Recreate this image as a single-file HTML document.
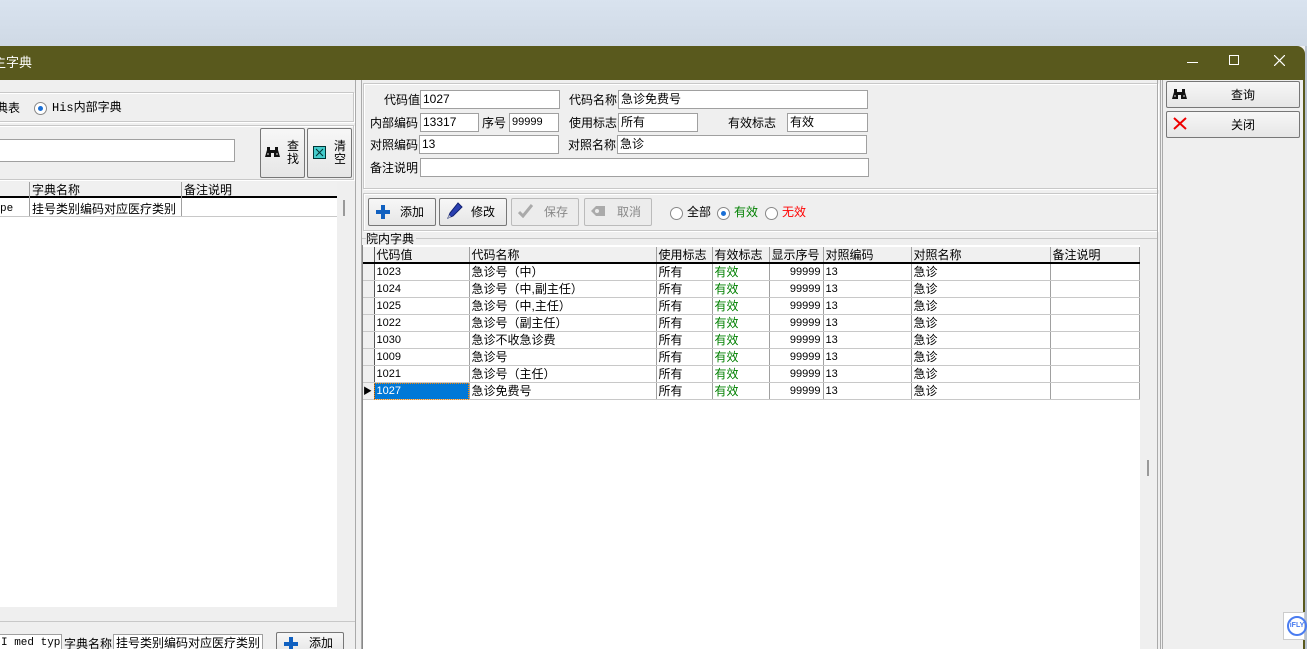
<!DOCTYPE html>
<html style="width:1307px;height:649px;overflow:hidden"><head><meta charset="utf-8">
<style>
*{box-sizing:border-box;margin:0;padding:0}
body{width:1307px;height:649px;overflow:hidden;background:#efefef;font-family:"Liberation Sans","Noto Sans CJK SC",sans-serif;font-size:12px;color:#000;position:relative}
.a{position:absolute}
.inp{position:absolute;background:#fff;border:1px solid #a0a0a0;height:19px;padding:1px 2px;font-size:12px;line-height:15px;white-space:nowrap;overflow:hidden}
.lbl{position:absolute;font-size:12px;line-height:14px;white-space:nowrap}
.btn{position:absolute;background:linear-gradient(#f7f7f7,#e6e6e6);border:1px solid #777;border-radius:2px;font-size:12px}
.grp{position:absolute;border:1px solid #c8c8c8;box-shadow:inset 1px 1px 0 #fff,1px 1px 0 #fff}
table{border-collapse:collapse;table-layout:fixed}
td{border-right:1px solid #a0a0a0;border-bottom:1px solid #c8c8c8;height:17px;padding:0 2px;font-size:11px;line-height:16px;white-space:nowrap;overflow:hidden}
td.c{font-size:12px}
.g{color:#008000;font-size:12px}
.r{text-align:right}
.hd td{background:#f0f0f0;border-bottom:2px solid #000;font-size:12px;height:16px;line-height:14px}
.ind{background:#f0f0f0;border-right:1px solid #555}
.radio{position:absolute;width:13px;height:13px;border:1px solid #888;border-radius:50%;background:#fff}
.radio.on::after{content:"";position:absolute;left:3px;top:3px;width:5px;height:5px;border-radius:50%;background:#1a6fd6}
</style></head><body>
<div class="a" style="left:0;top:0;width:1307px;height:46px;background:linear-gradient(#d9e3ef,#cfd9e5)"></div>
<!-- title bar -->
<div class="a" style="left:0;top:46px;width:1305px;height:34px;background:#59591d;border-top-right-radius:8px"></div>
<div class="a" style="left:-7px;top:52px;color:#fff;font-size:13px">主字典</div>
<div class="a" style="left:1187px;top:62px;width:11px;height:1px;background:#fff"></div>
<div class="a" style="left:1229px;top:55px;width:10px;height:10px;border:1px solid #fff"></div>
<svg class="a" style="left:1274px;top:55px" width="11" height="11"><path d="M0 0L11 11M11 0L0 11" stroke="#fff" stroke-width="1.2"/></svg>
<div class="a" style="left:1303px;top:80px;width:2px;height:569px;background:#59591d"></div>
<div class="a" style="left:1305px;top:46px;width:2px;height:603px;background:#b8c2d0"></div>

<!-- LEFT panel -->
<div class="grp" style="left:-2px;top:92px;width:356px;height:30px"></div>
<div class="lbl" style="left:-4px;top:101px">典表</div>
<div class="radio on" style="left:34px;top:102px"></div>
<div class="lbl" style="left:52px;top:101px;font-family:'Liberation Mono','Noto Sans CJK SC',monospace">His内部字典</div>
<div class="grp" style="left:-2px;top:125px;width:356px;height:55px"></div>
<div class="inp" style="left:-2px;top:139px;width:237px;height:23px"></div>
<div class="btn" style="left:260px;top:128px;width:45px;height:50px"></div>
<svg class="a" style="left:265px;top:146px" width="15" height="12"><path d="M2 1h3v3h5V1h3v3l2 7h-6V7H6v4H0l2-7z" fill="#111"/><rect x="2" y="7" width="2" height="2" fill="#777"/><rect x="11" y="7" width="2" height="2" fill="#777"/></svg>
<div class="lbl" style="left:287px;top:140px;width:12px;line-height:13px;white-space:normal">查找</div>
<div class="btn" style="left:307px;top:128px;width:45px;height:50px"></div>
<svg class="a" style="left:313px;top:146px" width="13" height="13"><rect x="0.5" y="0.5" width="12" height="12" fill="#4cc" stroke="#033"/><path d="M3 3l7 7M10 3l-7 7" stroke="#033"/></svg>
<div class="lbl" style="left:334px;top:140px;width:12px;line-height:13px;white-space:normal">清空</div>
<!-- left grid -->
<div class="a" style="left:0;top:182px;width:337px;height:425px;background:#fff"></div>
<div class="a" style="left:0;top:182px;width:337px;height:16px;background:#f0f0f0;border-bottom:2px solid #000"></div>
<div class="a" style="left:29px;top:182px;width:1px;height:34px;background:#a0a0a0"></div>
<div class="a" style="left:181px;top:182px;width:1px;height:34px;background:#a0a0a0"></div>
<div class="lbl" style="left:32px;top:183px">字典名称</div>
<div class="lbl" style="left:184px;top:183px">备注说明</div>
<div class="lbl" style="left:0;top:202px;font-family:'Liberation Mono',monospace;font-size:11px">pe</div>
<div class="lbl" style="left:32px;top:202px">挂号类别编码对应医疗类别</div>
<div class="a" style="left:0;top:216px;width:337px;height:1px;background:#c8c8c8"></div>
<div class="a" style="left:343px;top:200px;width:2px;height:16px;background:#999"></div>
<div class="a" style="left:0;top:621px;width:355px;height:1px;background:#c8c8c8"></div>
<div class="inp" style="left:-2px;top:634px;width:64px;font-family:'Liberation Mono',monospace;font-size:11px">I med type</div>
<div class="lbl" style="left:64px;top:637px">字典名称</div>
<div class="inp" style="left:113px;top:634px;width:150px">挂号类别编码对应医疗类别</div>
<div class="btn" style="left:276px;top:632px;width:68px;height:22px"></div>
<svg class="a" style="left:284px;top:637px" width="14" height="14"><path d="M5 0h4v5h5v4H9v5H5V9H0V5h5z" fill="#1060c0"/></svg>
<div class="lbl" style="left:309px;top:636px">添加</div>
<!-- splitter -->
<div class="a" style="left:355px;top:80px;width:7px;height:569px;border-left:1px solid #aaa;border-right:1px solid #aaa"></div>

<!-- RIGHT form -->
<div class="grp" style="left:363px;top:83px;width:795px;height:106px"></div>
<div class="lbl" style="left:384px;top:93px">代码值</div>
<div class="inp" style="left:420px;top:90px;width:140px">1027</div>
<div class="lbl" style="left:569px;top:93px">代码名称</div>
<div class="inp" style="left:618px;top:90px;width:250px">急诊免费号</div>
<div class="lbl" style="left:370px;top:116px">内部编码</div>
<div class="inp" style="left:420px;top:113px;width:59px">13317</div>
<div class="lbl" style="left:482px;top:116px">序号</div>
<div class="inp" style="left:509px;top:113px;width:50px;font-size:11px">99999</div>
<div class="lbl" style="left:569px;top:116px">使用标志</div>
<div class="inp" style="left:618px;top:113px;width:80px">所有</div>
<div class="lbl" style="left:728px;top:116px">有效标志</div>
<div class="inp" style="left:787px;top:113px;width:81px">有效</div>
<div class="lbl" style="left:370px;top:138px">对照编码</div>
<div class="inp" style="left:419px;top:135px;width:140px">13</div>
<div class="lbl" style="left:568px;top:138px">对照名称</div>
<div class="inp" style="left:617px;top:135px;width:250px">急诊</div>
<div class="lbl" style="left:370px;top:161px">备注说明</div>
<div class="inp" style="left:420px;top:158px;width:449px"></div>
<!-- toolbar -->
<div class="grp" style="left:363px;top:193px;width:795px;height:38px"></div>
<div class="btn" style="left:368px;top:198px;width:68px;height:28px"></div>
<svg class="a" style="left:376px;top:205px" width="14" height="14"><path d="M5 0h4v5h5v4H9v5H5V9H0V5h5z" fill="#1060c0"/></svg>
<div class="lbl" style="left:400px;top:205px">添加</div>
<div class="btn" style="left:439px;top:198px;width:68px;height:28px"></div>
<svg class="a" style="left:445px;top:202px" width="18" height="18"><path d="M13 1l4 4-9 9-5 2 2-5z" fill="#2a3fb0" stroke="#102070"/><path d="M3 16l1-3 2 2z" fill="#ccc"/></svg>
<div class="lbl" style="left:471px;top:205px">修改</div>
<div class="btn" style="left:511px;top:198px;width:68px;height:28px;border-color:#bbb;background:#ececec"></div>
<svg class="a" style="left:518px;top:204px" width="15" height="14"><path d="M1 8l4 4 9-11" stroke="#aaa" stroke-width="3" fill="none"/></svg>
<div class="lbl" style="left:544px;top:205px;color:#888">保存</div>
<div class="btn" style="left:584px;top:198px;width:68px;height:28px;border-color:#bbb;background:#ececec"></div>
<svg class="a" style="left:591px;top:205px" width="16" height="12"><path d="M5 1h9v10H5L0 6z" fill="#aaa"/><circle cx="6" cy="6" r="2" fill="#ececec"/></svg>
<div class="lbl" style="left:617px;top:205px;color:#888">取消</div>
<div class="radio" style="left:670px;top:207px"></div>
<div class="lbl" style="left:687px;top:205px">全部</div>
<div class="radio on" style="left:717px;top:207px"></div>
<div class="lbl" style="left:734px;top:205px;color:#008000">有效</div>
<div class="radio" style="left:765px;top:207px"></div>
<div class="lbl" style="left:782px;top:205px;color:#f00">无效</div>
<!-- grid group -->
<div class="a" style="left:362px;top:238px;width:796px;height:1px;background:#c8c8c8"></div>
<div class="lbl" style="left:366px;top:232px;background:#efefef;padding-right:2px">院内字典</div>
<div class="a" style="left:362px;top:245px;width:778px;height:404px;background:#fff;border-left:1px solid #888"></div>
<div class="a" style="left:1147px;top:460px;width:2px;height:16px;background:#999"></div>
<div class="a" style="left:1157px;top:80px;width:1px;height:569px;background:#aaa"></div>
<div class="a" style="left:1160px;top:80px;width:3px;height:569px;border-left:1px solid #aaa;border-right:1px solid #aaa"></div>
<table class="a" style="left:363px;top:247px;width:776px">
<colgroup><col style="width:11px"><col style="width:95px"><col style="width:187px"><col style="width:56px"><col style="width:57px"><col style="width:54px"><col style="width:88px"><col style="width:139px"><col style="width:89px"></colgroup>
<tr class="hd"><td class="ind"></td><td>代码值</td><td>代码名称</td><td>使用标志</td><td>有效标志</td><td>显示序号</td><td>对照编码</td><td>对照名称</td><td>备注说明</td></tr>
<tr><td class="ind"></td><td>1023</td><td class="c">急诊号（中）</td><td class="c">所有</td><td class="g">有效</td><td class="r">99999</td><td>13</td><td class="c">急诊</td><td></td></tr>
<tr><td class="ind"></td><td>1024</td><td class="c">急诊号（中,副主任）</td><td class="c">所有</td><td class="g">有效</td><td class="r">99999</td><td>13</td><td class="c">急诊</td><td></td></tr>
<tr><td class="ind"></td><td>1025</td><td class="c">急诊号（中,主任）</td><td class="c">所有</td><td class="g">有效</td><td class="r">99999</td><td>13</td><td class="c">急诊</td><td></td></tr>
<tr><td class="ind"></td><td>1022</td><td class="c">急诊号（副主任）</td><td class="c">所有</td><td class="g">有效</td><td class="r">99999</td><td>13</td><td class="c">急诊</td><td></td></tr>
<tr><td class="ind"></td><td>1030</td><td class="c">急诊不收急诊费</td><td class="c">所有</td><td class="g">有效</td><td class="r">99999</td><td>13</td><td class="c">急诊</td><td></td></tr>
<tr><td class="ind"></td><td>1009</td><td class="c">急诊号</td><td class="c">所有</td><td class="g">有效</td><td class="r">99999</td><td>13</td><td class="c">急诊</td><td></td></tr>
<tr><td class="ind"></td><td>1021</td><td class="c">急诊号（主任）</td><td class="c">所有</td><td class="g">有效</td><td class="r">99999</td><td>13</td><td class="c">急诊</td><td></td></tr>
<tr><td class="ind" style="font-size:9px;padding:0">▶</td><td style="background:#0078d7;color:#fff;outline:1px dotted #f80;outline-offset:-1px">1027</td><td class="c">急诊免费号</td><td class="c">所有</td><td class="g">有效</td><td class="r">99999</td><td>13</td><td class="c">急诊</td><td></td></tr>
</table>

<!-- far right buttons -->
<div class="btn" style="left:1166px;top:81px;width:134px;height:27px"></div>
<svg class="a" style="left:1172px;top:88px" width="15" height="12"><path d="M2 1h3v3h5V1h3v3l2 7h-6V7H6v4H0l2-7z" fill="#111"/><rect x="2" y="7" width="2" height="2" fill="#777"/><rect x="11" y="7" width="2" height="2" fill="#777"/></svg>
<div class="lbl" style="left:1231px;top:88px">查询</div>
<div class="btn" style="left:1166px;top:111px;width:134px;height:27px"></div>
<svg class="a" style="left:1173px;top:117px" width="14" height="13"><path d="M1 1l12 11M13 1L1 12" stroke="#e00" stroke-width="2"/></svg>
<div class="lbl" style="left:1231px;top:118px">关闭</div>
<div class="a" style="left:1283px;top:612px;width:22px;height:28px;background:#fff;border:1px solid #ccc"></div>
<div class="a" style="left:1287px;top:616px;width:20px;height:20px;border:2px solid #4a7cf0;border-radius:50%;color:#4a7cf0;font-size:7px;font-weight:bold;line-height:16px;text-align:center">iFLY</div>
</body></html>
